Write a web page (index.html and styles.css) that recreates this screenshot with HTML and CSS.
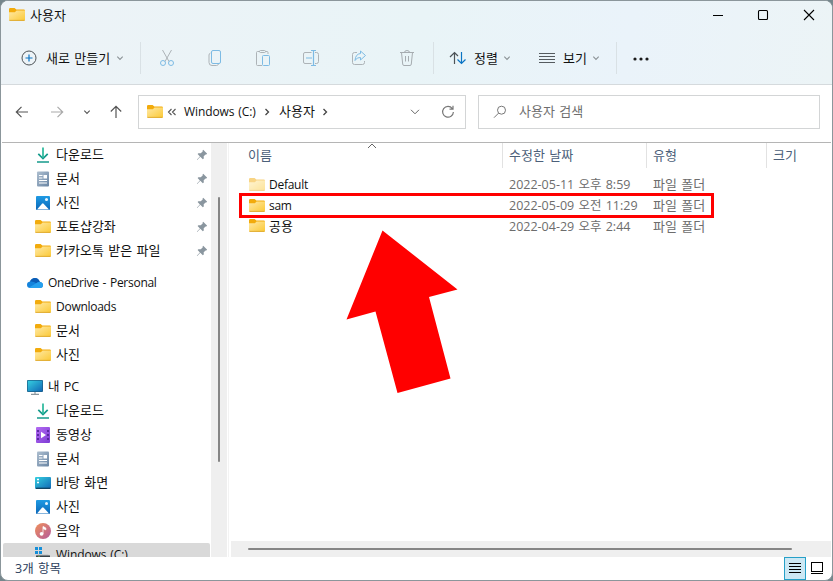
FILE: index.html
```html
<!DOCTYPE html>
<html lang="ko">
<head>
  <meta charset="UTF-8">
  <meta name="viewport" content="width=device-width, initial-scale=1.0">
  <title>사용자</title>
  <link rel="stylesheet" href="styles.css">
</head>
<body>
  <!-- shared icons -->
  <svg class="defs" width="0" height="0">
    <defs>
      <linearGradient id="gFolder" x1="0" y1="0" x2="1" y2="1"><stop offset="0" stop-color="#ffe9a6"/><stop offset="1" stop-color="#fbc936"/></linearGradient>
      <linearGradient id="gDoc" x1="0" y1="0" x2="1" y2="1"><stop offset="0" stop-color="#aebfd0"/><stop offset="1" stop-color="#6884a3"/></linearGradient>
      <linearGradient id="gPic" x1="0" y1="0" x2="0" y2="1"><stop offset="0" stop-color="#1f9be4"/><stop offset="1" stop-color="#0b67b8"/></linearGradient>
      <linearGradient id="gPc" x1="0" y1="0" x2="1" y2="1"><stop offset="0" stop-color="#35cfe0"/><stop offset="1" stop-color="#1167b5"/></linearGradient>
      <linearGradient id="gVideo" x1="0" y1="0" x2="1" y2="1"><stop offset="0" stop-color="#b36bf2"/><stop offset="1" stop-color="#7d3bd4"/></linearGradient>
      <linearGradient id="gMusic" x1="0" y1="0" x2="1" y2="1"><stop offset="0" stop-color="#f0905a"/><stop offset="1" stop-color="#b45a9c"/></linearGradient>
    </defs>
    <symbol id="folder" viewBox="0 0 16 16">
      <path d="M0 2.300Q0 1 1.300 1H5.600L7.300 2.600H14.700Q16 2.600 16 3.900V8H0z" fill="#f2ab0c"/>
      <path d="M0 5.200H5.800L7.600 3.500H16V12.700q0 1-1 1H1q-1 0-1-1z" fill="url(#gFolder)"/>
      <path d="M.4 13.400H15.600" stroke="#d9a01e" stroke-width=".8"/>
    </symbol>
    <symbol id="download" viewBox="0 0 16 16">
      <path d="M3.300 6.800 8 11.500l4.700-4.700M2 15H14" fill="none" stroke="#169b8c" stroke-width="1.700"/>
      <path d="M8 .5V11" stroke="#27b89a" stroke-width="1.700"/>
    </symbol>
    <symbol id="document" viewBox="0 0 16 16">
      <rect x="2" y=".5" width="12" height="15" rx="1" fill="url(#gDoc)"/>
      <path d="M4 4.500H7.500M4 7H7.500M4 9.500H12M4 12H12" stroke="#fff"/>
      <path d="M8.500 4H12V7.500H8.500z" fill="#fff"/>
    </symbol>
    <symbol id="picture" viewBox="0 0 16 16">
      <rect x="1" y="1" width="14" height="14" rx="1" fill="url(#gPic)"/>
      <path d="M2 14.500 7 8.700q.8-.8 1.600 0L14 14.500z" fill="#fff"/>
      <circle cx="11.500" cy="4.500" r="1.500" fill="#e7f5ff"/>
    </symbol>
    <symbol id="video" viewBox="0 0 16 16">
      <rect x="1" y="0" width="14" height="16" rx="1" fill="url(#gVideo)"/>
      <path d="M3 3V15M13 3V15" stroke="#4b1f91" stroke-width="1.600" stroke-dasharray="2 2"/>
      <path d="M6 4.700 11 8 6 11.300z" fill="#fff"/>
    </symbol>
    <symbol id="desktop" viewBox="0 0 16 16">
      <rect x="0" y="2" width="16" height="12" rx="1" fill="url(#gPc)"/>
      <path d="M2 4.500H4M2 7.500H4" stroke="#fff" stroke-width="1.500"/>
      <path d="M1 13.300H15" stroke="#12415f" stroke-width="1.300"/>
    </symbol>
    <symbol id="music" viewBox="0 0 16 16">
      <circle cx="8" cy="8" r="8" fill="url(#gMusic)"/>
      <circle cx="6.600" cy="10.800" r="1.900" fill="#fff"/>
      <path d="M8 10.800V3.500L10.800 5V6.800L8 5.500" fill="#fff" stroke="#fff" stroke-width=".8"/>
    </symbol>
    <symbol id="pc" viewBox="0 0 16 16">
      <rect x="0" y="1" width="16" height="12" rx="1" fill="#1a5d86"/>
      <rect x=".7" y="1.700" width="14.600" height="10.600" fill="url(#gPc)"/>
      <path d="M8 13V15M4 15.300H12" stroke="#8b969d" stroke-width="1.200"/>
    </symbol>
    <symbol id="onedrive" viewBox="0 0 16 16">
      <path d="M3.500 13Q0 13 0 9.800 0 7.200 3 6.600 4.500 3 8 3q3.500 0 4.800 3.800Q16 7.500 16 10q0 3-3 3z" fill="#1483dc"/>
      <path d="M3 6.600Q4.500 3 8 3q3.500 0 4.800 3.800-2 0-3.600 1.500Q6.500 6 3 6.600z" fill="#0c5cb5"/>
      <path d="M2 12.600 9.200 8.300Q12 6.300 14.500 7.500 16 8.500 16 10q0 3-3 3H3.500z" fill="#26a0ee"/>
    </symbol>
    <symbol id="drive" viewBox="0 0 16 16">
      <path d="M0 0H3V3H0zM4 0H7V3H4zM0 4H3V7H0zM4 4H7V7H4z" fill="#168fd8"/>
      <path d="M3 7.500H13L15 9H1z" fill="#b9bec1"/>
      <path d="M1 8.500H15V14H1z" fill="#3b4347"/>
      <path d="M3 10H5" stroke="#7fd34e"/>
    </symbol>
    <symbol id="pin" viewBox="0 0 12 12">
      <path d="M7.200.8 11.200 4.800 10.200 5.600 9.600 5.400 7.700 7.300 7.800 9.600 6.800 10.300 4.300 7.800 1.200 11.100.8 10.700 3.900 7.400 1.600 5.100 2.400 4.200 4.700 4.300 6.700 2.400 6.500 1.700z" fill="#8a969f"/>
    </symbol>
    <symbol id="chevron" viewBox="0 0 8 8">
      <path d="M1.300 2.700 4 5.400 6.700 2.700" fill="none" stroke="currentColor" stroke-width="1.100"/>
    </symbol>
  </svg>

  <div class="window">
    <header class="top">
      <div class="titlebar">
        <svg class="icon"><use href="#folder"/></svg>
        <h1 class="title">사용자</h1>
        <div class="controls">
          <svg width="12" height="12"><path d="M2 6.500H12" stroke="#000"/></svg>
          <svg width="12" height="12"><rect x="1.500" y="1.500" width="9" height="9" rx="1" fill="none" stroke="#000" stroke-width="1.100"/></svg>
          <svg width="12" height="12"><path d="M1 1 11 11M11 1 1 11" stroke="#000" stroke-width="1.100"/></svg>
        </div>
      </div>

      <div class="toolbar">
        <div class="tool new">
          <svg width="16" height="16" fill="none"><circle cx="8" cy="8" r="7" stroke="#4d5357"/><path d="M8 4.500V11.500M4.500 8H11.500" stroke="#0a74c4" stroke-width="1.200"/></svg>
          <span>새로 만들기</span>
          <svg class="chev"><use href="#chevron"/></svg>
        </div>
        <div class="tool icons">
          <!-- cut -->
          <svg width="16" height="18" fill="none"><path d="M3.500 1 10 12.500M12.500 1 6 12.500" stroke="#adb3b7"/><circle cx="4" cy="14" r="2.500" stroke="#7dbbe4"/><circle cx="12" cy="14" r="2.500" stroke="#7dbbe4"/></svg>
          <!-- copy -->
          <svg width="16" height="18" fill="none"><path d="M3.500 4Q2 4.500 2 6V13.500Q2 16.500 5 16.500H9.500Q11 16.500 11.500 15" stroke="#adb3b7"/><rect x="4.500" y="1.500" width="9" height="13" rx="1.500" stroke="#7dbbe4"/></svg>
          <!-- paste -->
          <svg width="16" height="18" fill="none"><path d="M5 2.500H2.500Q1.500 2.500 1.500 3.500V15.500Q1.500 16.500 2.500 16.500H7M10.500 2.500H12Q13 2.500 13 3.500V5" stroke="#adb3b7"/><rect x="4.500" y="1.500" width="6" height="2" rx="1" stroke="#adb3b7"/><rect x="7.500" y="6.500" width="7" height="10" rx="1" stroke="#7dbbe4"/></svg>
          <!-- rename -->
          <svg width="18" height="18" fill="none"><path d="M9.500 3.500H3Q1.500 3.500 1.500 5V13Q1.500 14.500 3 14.500H9.500M13 3.500H14.500Q16.500 3.500 16.500 5.500V12.500Q16.500 14.500 14.500 14.500H13" stroke="#adb3b7"/><path d="M4 9H10M11.500 1.500V16.500M9 1.500H14M9 16.500H14" stroke="#7dbbe4" stroke-width="1.200"/></svg>
          <!-- share -->
          <svg width="16" height="18" fill="none"><path d="M6 3.500H3.500Q1.500 3.500 1.500 5.500V13.500Q1.500 15.500 3.500 15.500H11.500Q13.500 15.500 13.500 13.500V12" stroke="#adb3b7"/><path d="M9.500 2 14.500 6.500 9.500 11V8.500Q6 8 4 11.500 4.500 5 9.500 4.500z" stroke="#7dbbe4"/></svg>
          <!-- delete -->
          <svg width="16" height="18" fill="none"><path d="M1 3.500H15M5.500 3.500Q5.500 1.500 8 1.500T10.500 3.500M2.500 3.500 3.700 15Q3.800 16.500 5 16.500H11Q12.200 16.500 12.300 15L13.500 3.500M6.500 7V12.500M9.500 7V12.500" stroke="#a6acb0"/></svg>
        </div>
        <div class="tool sort">
          <svg width="18" height="14" fill="none"><path d="M5.500 13V1.500M1 6 5.500 1.500 9 5" stroke="#4d5357" stroke-width="1.200"/><path d="M12.500 1V12.500M8.500 8.500 12.500 12.500 16.500 8.500" stroke="#0a74c4" stroke-width="1.200"/></svg>
          <span>정렬</span>
          <svg class="chev"><use href="#chevron"/></svg>
        </div>
        <div class="tool view">
          <svg width="16" height="12"><path d="M0 1.500H16M0 4.500H16M0 7.500H16M0 10.500H16" stroke="#555b5f"/></svg>
          <span>보기</span>
          <svg class="chev"><use href="#chevron"/></svg>
        </div>
        <div class="tool more">
          <svg width="18" height="6" fill="#1a1a1a"><circle cx="3" cy="4" r="1.600"/><circle cx="9" cy="4" r="1.600"/><circle cx="15" cy="4" r="1.600"/></svg>
        </div>
      </div>
    </header>

    <div class="nav">
      <div class="arrows">
        <svg width="14" height="14"><path d="M13 7H1.500M6.500 1.800 1.300 7 6.500 12.200" fill="none" stroke="#555" stroke-width="1.200"/></svg>
        <svg width="14" height="14"><path d="M1 7H12.500M7.500 1.800 12.700 7 7.500 12.200" fill="none" stroke="#aaa" stroke-width="1.200"/></svg>
        <svg class="chev recent"><use href="#chevron"/></svg>
        <svg width="14" height="14"><path d="M7 13V1.500M1.800 6.500 7 1.300 12.200 6.500" fill="none" stroke="#555" stroke-width="1.200"/></svg>
      </div>
      <div class="address">
        <svg class="icon"><use href="#folder"/></svg>
        <svg class="dbl" width="10" height="8"><path d="M4.500 1 1.500 4 4.500 7M8.500 1 5.500 4 8.500 7" fill="none" stroke="#555" stroke-width="1.100"/></svg>
        <span class="crumb drive latin">Windows (C:)</span>
        <svg class="sep" width="6" height="8"><path d="M1.500 1 4.500 4 1.500 7" fill="none" stroke="#444" stroke-width="1.300"/></svg>
        <span class="crumb">사용자</span>
        <svg class="sep" width="6" height="8"><path d="M1.500 1 4.500 4 1.500 7" fill="none" stroke="#444" stroke-width="1.300"/></svg>
        <svg class="drop" width="10" height="6"><path d="M1 .8 5 4.800 9 .8" fill="none" stroke="#666"/></svg>
        <svg class="refresh" width="14" height="14"><path d="M11.300 3.500A5.400 5.400 0 1 0 12.400 7M12 .8V4.200H8.500" fill="none" stroke="#777" stroke-width="1.200"/></svg>
      </div>
      <div class="search">
        <svg width="14" height="14"><circle cx="8.500" cy="5.200" r="4" fill="none" stroke="#777"/><path d="M5.600 8.100 1 12.700" stroke="#777"/></svg>
        <span>사용자 검색</span>
      </div>
    </div>

    <div class="body">
      <nav class="sidebar">
        <ul class="tree">
          <li class="item"><svg class="icon"><use href="#download"/></svg>다운로드<svg class="pin"><use href="#pin"/></svg></li>
          <li class="item"><svg class="icon"><use href="#document"/></svg>문서<svg class="pin"><use href="#pin"/></svg></li>
          <li class="item"><svg class="icon"><use href="#picture"/></svg>사진<svg class="pin"><use href="#pin"/></svg></li>
          <li class="item"><svg class="icon"><use href="#folder"/></svg>포토샵강좌<svg class="pin"><use href="#pin"/></svg></li>
          <li class="item"><svg class="icon"><use href="#folder"/></svg>카카오톡 받은 파일<svg class="pin"><use href="#pin"/></svg></li>
          <li class="item root latin"><svg class="icon"><use href="#onedrive"/></svg>OneDrive - Personal</li>
          <li class="item latin"><svg class="icon"><use href="#folder"/></svg>Downloads</li>
          <li class="item"><svg class="icon"><use href="#folder"/></svg>문서</li>
          <li class="item"><svg class="icon"><use href="#folder"/></svg>사진</li>
          <li class="item root pc"><svg class="icon"><use href="#pc"/></svg>내 PC</li>
          <li class="item"><svg class="icon"><use href="#download"/></svg>다운로드</li>
          <li class="item"><svg class="icon"><use href="#video"/></svg>동영상</li>
          <li class="item"><svg class="icon"><use href="#document"/></svg>문서</li>
          <li class="item"><svg class="icon"><use href="#desktop"/></svg>바탕 화면</li>
          <li class="item"><svg class="icon"><use href="#picture"/></svg>사진</li>
          <li class="item"><svg class="icon"><use href="#music"/></svg>음악</li>
          <li class="item selected latin"><svg class="icon"><use href="#drive"/></svg>Windows (C:)</li>
        </ul>
        <div class="vscroll"><div class="vthumb"></div></div>
      </nav>

      <main class="files">
        <div class="columns">
          <div class="col">이름<svg class="asc" width="10" height="6"><path d="M1 5 5 1 9 5" fill="none" stroke="#666"/></svg></div>
          <div class="col">수정한 날짜</div>
          <div class="col">유형</div>
          <div class="col">크기</div>
        </div>
        <div class="rows">
          <div class="row"><div class="name latin"><svg class="icon faded"><use href="#folder"/></svg>Default</div><div class="date">2022-05-11 오후 8:59</div><div class="type">파일 폴더</div></div>
          <div class="row"><div class="name latin"><svg class="icon"><use href="#folder"/></svg>sam</div><div class="date">2022-05-09 오전 11:29</div><div class="type">파일 폴더</div></div>
          <div class="row"><div class="name"><svg class="icon"><use href="#folder"/></svg>공용</div><div class="date">2022-04-29 오후 2:44</div><div class="type">파일 폴더</div></div>
        </div>
        <div class="hscroll"><div class="hthumb"></div></div>
      </main>
    </div>

    <footer class="status">
      <span class="count">3개 항목</span>
      <div class="modes">
        <div class="mode active"><svg width="12" height="11"><path d="M0 .5H12M0 3.500H12M0 6.500H12M0 9.500H12" stroke="#000"/></svg></div>
        <div class="mode"><svg width="12" height="12"><rect x=".5" y=".5" width="11" height="9" fill="none" stroke="#000"/><path d="M0 11.500H12" stroke="#000"/></svg></div>
      </div>
    </footer>

    <div class="mark-box"></div>
    <svg class="mark-arrow" width="112" height="164"><path d="M36.500 .5 111.500 59.500 83 67 104.500 148.500 51.500 163 29.500 81.500 .5 89.500z" fill="#f00"/></svg>
  </div>
</body>
</html>
```
FILE: styles.css
```css
* {
  box-sizing: border-box;
}
body {
  margin: 0;
  background: #75868c;
  font-family: "Open Sans", "Noto Sans CJK KR", sans-serif;
  font-size: 13px;
  line-height: 20px;
  word-spacing: 1px;
  color: #111;
  overflow: hidden;
}
svg {
  display: block;
  flex-shrink: 0;
}
.defs {
  position: absolute;
}
.window {
  position: relative;
  display: flex;
  flex-direction: column;
  width: 833px;
  height: 581px;
  border: 1px solid #8b969b;
  border-radius: 8px;
  background: #fff;
  overflow: hidden;
  white-space: nowrap;
}
.icon {
  width: 16px;
  height: 16px;
}
.chev {
  width: 8px;
  height: 8px;
  color: #8b9296;
}
.latin {
  font-size: 12px;
  letter-spacing: -0.27px;
}

/* title bar and toolbar */
.top {
  height: 84px;
  background: linear-gradient(100deg, #edf3f7, #e9f4f7 50%, #eaf3fa 75%, #ecf4f6);
  border-bottom: 1px solid #d5dadd;
}
.titlebar {
  display: flex;
  align-items: center;
  height: 28px;
  padding: 0 17px 0 8px;
}
.title {
  margin: 0 0 0 5px;
  font-size: 13px;
  font-weight: normal;
}
.controls {
  display: flex;
  gap: 34px;
  margin-left: auto;
}
.toolbar {
  display: flex;
  align-items: center;
  height: 32px;
  margin-top: 13px;
}
.tool {
  display: flex;
  align-items: center;
  height: 32px;
}
.tool span {
  padding-bottom: 1px;
}
.tool + .tool {
  border-left: 1px solid #d9e1e5;
}
.new {
  width: 139px;
  padding-left: 20px;
}
.new span {
  width: 70px;
  margin-left: 9px;
}
.icons {
  width: 293px;
  padding-left: 18px;
  gap: 32px;
}
.icons svg:nth-child(4) {
  margin: 0 -1px;
}
.sort {
  width: 89px;
  padding-left: 15px;
}
.sort span {
  width: 29px;
  margin-left: 7px;
}
.tool.view {
  width: 94px;
  padding-left: 17px;
  border-left: 0;
}
.view span {
  width: 29px;
  margin-left: 8px;
}
.more {
  padding-left: 15px;
}

/* address row */
.nav {
  display: flex;
  align-items: center;
  height: 57px;
  padding: 0 12px 4px 14px;
}
.arrows {
  display: flex;
  align-items: center;
  width: 123px;
}
.arrows svg + svg {
  margin-left: 21px;
}
.arrows .recent {
  margin: 0 4px 0 19px;
  color: #555;
}
.arrows .recent + svg {
  margin-left: 14px;
}
.address,
.search {
  display: flex;
  align-items: center;
  height: 34px;
  border: 1px solid #d3d5d6;
}
.address {
  width: 328px;
  padding: 0 10px 0 8px;
}
.dbl {
  margin: 0 7px 0 4px;
}
.crumb {
  padding-bottom: 2px;
}
.drive {
  width: 73px;
  padding-bottom: 0;
  letter-spacing: -0.1px;
}
.crumb + .sep {
  margin: 0 9px 0 7px;
}
.drop {
  margin-left: auto;
}
.refresh {
  margin-left: 21px;
}
.search {
  width: 342px;
  margin-left: 12px;
  padding-left: 14px;
  color: #6e6e6e;
}
.search span {
  margin-left: 12px;
  padding-bottom: 2px;
}

/* folder tree */
.body {
  display: flex;
  height: 415px;
  margin: 0 1px;
  border-top: 1px solid #b5b5b5;
}
.sidebar {
  display: flex;
  width: 225px;
  overflow: hidden;
}
.tree {
  width: 209px;
  height: 414px;
  margin: 0;
  padding: 0 1px;
  list-style: none;
  overflow: hidden;
}
.item {
  display: flex;
  align-items: center;
  gap: 5px;
  height: 24px;
  padding: 0 2px 2px 32px;
}
.item svg {
  margin-top: 2px;
}
.item.latin,
.item.pc {
  padding-bottom: 0;
}
.item.latin svg,
.item.pc svg {
  margin-top: 0;
}
.item.root {
  margin-top: 8px;
  padding-left: 24px;
}
.item.pc {
  font-size: 12.5px;
}
.item.selected {
  background: #d9d9d9;
  border-radius: 2px;
  letter-spacing: -0.1px;
}
.pin {
  width: 12px;
  height: 12px;
  margin-left: auto;
}
.vscroll {
  width: 16px;
  padding: 54px 0 0 7px;
  background: #efefef;
}
.vthumb {
  width: 2px;
  height: 265px;
  border-radius: 1px;
  background: #858585;
}

/* file list */
.files {
  display: flex;
  flex-direction: column;
  flex: 1;
  margin-left: 1px;
  padding-left: 2px;
  border-left: 1px solid #f3f3f3;
}
.columns,
.row {
  display: grid;
  grid-template-columns: 271px 144px 120px 1fr;
}
.columns {
  height: 25px;
  color: #4c607a;
}
.col {
  padding: 2px 0 0 6px;
  border-left: 1px solid #e2e2e2;
}
.col:first-child {
  display: flex;
  border-left: 0;
  padding-left: 17px;
}
.asc {
  margin: -2px 0 0 95px;
}
.rows {
  flex: 1;
  padding-top: 6px;
}
.row {
  height: 21px;
}
.name {
  display: flex;
  align-items: center;
  gap: 4px;
  padding-left: 18px;
}
.name:not(.latin) {
  padding-bottom: 1px;
}
.faded {
  opacity: 0.5;
}
.date,
.type {
  padding-left: 7px;
  color: #6d6d6d;
}
.date {
  padding-top: 1px;
  font-size: 12.5px;
}
.hscroll {
  height: 16px;
  padding: 7px 0 0 17px;
  background: #efefef;
}
.hthumb {
  width: 544px;
  height: 2px;
  border-radius: 1px;
  background: #858585;
}

/* status bar */
.status {
  display: flex;
  height: 23px;
  padding: 0 4px 0 14px;
}
.count {
  margin-top: 2px;
  font-size: 12.5px;
  color: #2c405c;
}
.modes {
  display: flex;
  margin-left: auto;
}
.mode {
  display: flex;
  align-items: center;
  justify-content: center;
  width: 22px;
  height: 22px;
}
.mode.active {
  height: 23px;
  border: 1px solid #26a0c8;
  background: #cce8f4;
}

/* annotations drawn over the window */
.mark-box {
  position: absolute;
  left: 238px;
  top: 192px;
  width: 475px;
  height: 25px;
  border: 3px solid #f00;
}
.mark-arrow {
  position: absolute;
  left: 345px;
  top: 229px;
}
```
